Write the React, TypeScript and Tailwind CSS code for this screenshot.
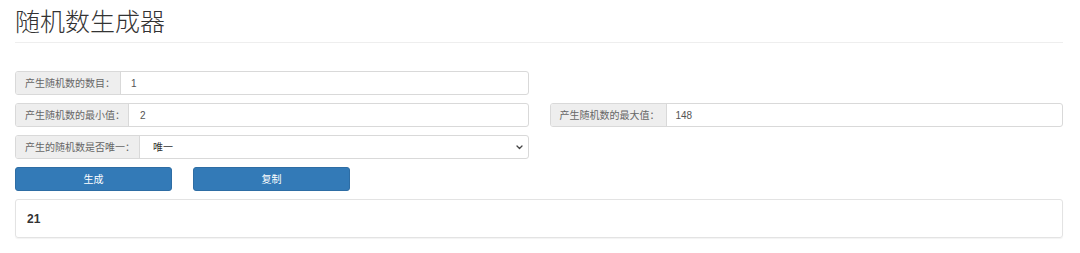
import type { ReactNode } from 'react'

const font = { fontFamily: '"Liberation Sans", "Noto Sans CJK SC", sans-serif' }

function Group({ label, width, children }: { label: string; width: string; children: ReactNode }) {
  return (
    <div className="flex h-[24px] rounded-[3px] border border-[#d9d9d9] bg-white overflow-hidden">
      <div className={`${width} shrink-0 flex items-center pl-[9px] bg-[#eeeeee] border-r border-[#d9d9d9] text-[10px] text-[#666] whitespace-nowrap`}>
        {label}
      </div>
      {children}
    </div>
  )
}

export default function App() {
  return (
    <div className="bg-white min-h-[253px] pl-[15px] pr-[17px]" style={font}>
      <h1 className="pt-[7px] pb-[5px] text-[25px] leading-[30px] font-light text-[#333] border-b border-[#eeeeee]">
        随机数生成器
      </h1>

      <div className="mt-[28px] flex flex-col gap-[8px]">
        <div className="grid grid-cols-2 gap-x-[21px]">
          <Group label="产生随机数的数目：" width="w-[105px]">
            <div className="flex-1 flex items-center pl-[10px] text-[10px] text-[#555]">1</div>
          </Group>
          <div />
        </div>

        <div className="grid grid-cols-2 gap-x-[21px]">
          <Group label="产生随机数的最小值：" width="w-[113px]">
            <div className="flex-1 flex items-center pl-[11px] text-[10px] text-[#555]">2</div>
          </Group>
          <Group label="产生随机数的最大值：" width="w-[116px]">
            <div className="flex-1 flex items-center pl-[9px] text-[10px] text-[#555]">148</div>
          </Group>
        </div>

        <div className="grid grid-cols-2 gap-x-[21px]">
          <Group label="产生的随机数是否唯一：" width="w-[124px]">
            <div className="flex-1 flex items-center justify-between pl-[13px] pr-[5px] text-[10px] text-[#333]">
              <span>唯一</span>
              <svg width="7" height="5" viewBox="0 0 7 5" fill="none">
                <path d="M1 1 L3.5 3.5 L6 1" stroke="#444" strokeWidth="1.3" strokeLinecap="round" strokeLinejoin="round" />
              </svg>
            </div>
          </Group>
          <div />
        </div>

        <div className="flex gap-[21px]">
          <button className="w-[157px] h-[24px] rounded-[3px] bg-[#337ab7] border border-[#2e6da4] text-white text-[10px]">
            生成
          </button>
          <button className="w-[157px] h-[24px] rounded-[3px] bg-[#337ab7] border border-[#2e6da4] text-white text-[10px]">
            复制
          </button>
        </div>

        <div className="h-[39px] rounded-[3px] border border-[#e3e3e3] shadow-[0_1px_1px_rgba(0,0,0,0.05)] flex items-center pl-[11px] text-[12px] font-bold text-[#333]">
          21
        </div>
      </div>
    </div>
  )
}
